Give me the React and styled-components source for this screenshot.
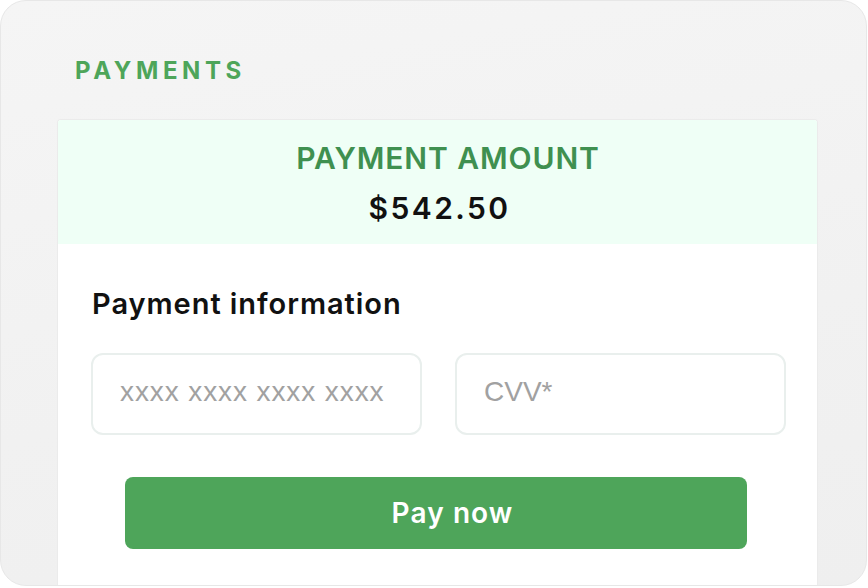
import React from 'react'
import styled, { createGlobalStyle } from 'styled-components'

const GlobalStyle = createGlobalStyle`
    * { box-sizing: border-box; }
    body {
        margin: 0;
        background: #ffffff;
        font-family: Inter, "Open Sans", sans-serif;
    }
`

const Frame = styled.div`
    width: 867px;
    height: 586px;
    margin: 0;
    border: 1px solid #e7e7e7;
    border-radius: 26px;
    background: linear-gradient(170deg, #f5f5f5 0%, #f1f1f1 60%, #efefef 100%);
    overflow: hidden;
    padding: 0 49px 0 57px;
    display: flex;
    flex-direction: column;
`

const Title = styled.h1`
    margin: 0;
    padding: 55px 0 0 17px;
    height: 119px;
    font-size: 24px;
    line-height: 30px;
    font-weight: 700;
    letter-spacing: 4.6px;
    color: #4ea55a;
`

const Card = styled.section`
    flex: 1;
    background: #ffffff;
    border-radius: 3px 3px 0 0;
    box-shadow: 0 0 0 1px #ebebeb;
    display: flex;
    flex-direction: column;
`

const AmountHeader = styled.div`
    background: #effff6;
    border-radius: 3px 3px 0 0;
    padding: 20px 0 18px;
    display: flex;
    flex-direction: column;
    align-items: center;
    gap: 14px;
`

const AmountLabel = styled.div`
    margin-left: 21px;
    font-size: 30px;
    line-height: 36px;
    font-weight: 600;
    color: #3f9050;
    letter-spacing: 0.9px;
`

const AmountValue = styled.div`
    margin-left: 4px;
    font-size: 30px;
    line-height: 36px;
    font-weight: 600;
    color: #111111;
    letter-spacing: 2.4px;
`

const Body = styled.div`
    padding: 42px 31px 0 33px;
    display: flex;
    flex-direction: column;
`

const SectionTitle = styled.h2`
    margin: 0 0 31px 1px;
    font-size: 29px;
    line-height: 36px;
    font-weight: 600;
    letter-spacing: 0.95px;
    color: #111111;
`

const Fields = styled.div`
    display: grid;
    grid-template-columns: 1fr 1fr;
    gap: 33px;
`

const Field = styled.input`
    height: 82px;
    width: 100%;
    border: 2px solid #e9efed;
    border-radius: 12px;
    padding: 0 0 5px 27px;
    background: #ffffff;
    font-family: "Liberation Sans", Arial, sans-serif;
    font-size: 28px;
    color: #222;
    outline: none;

    &::placeholder {
        color: #a1a1a1;
        letter-spacing: ${props => props.spaced ? "0.9px" : "0"};
    }
`

const PayButton = styled.button`
    margin: 42px 0 0 34px;
    width: 622px;
    height: 72px;
    border: none;
    border-radius: 8px;
    background: #4ea55a;
    color: #ffffff;
    font-family: Inter, "Open Sans", sans-serif;
    font-size: 28px;
    font-weight: 600;
    letter-spacing: 1.1px;
    cursor: pointer;
    padding: 0 0 0 33px;
`

const App = () => {
    return (
        <>
            <GlobalStyle />
            <Frame>
                <Title>PAYMENTS</Title>
                <Card>
                    <AmountHeader>
                        <AmountLabel>PAYMENT AMOUNT</AmountLabel>
                        <AmountValue>$542.50</AmountValue>
                    </AmountHeader>
                    <Body>
                        <SectionTitle>Payment information</SectionTitle>
                        <Fields>
                            <Field spaced placeholder="xxxx xxxx xxxx xxxx" />
                            <Field placeholder="CVV*" />
                        </Fields>
                        <PayButton>Pay now</PayButton>
                    </Body>
                </Card>
            </Frame>
        </>
    )
}

export default App
